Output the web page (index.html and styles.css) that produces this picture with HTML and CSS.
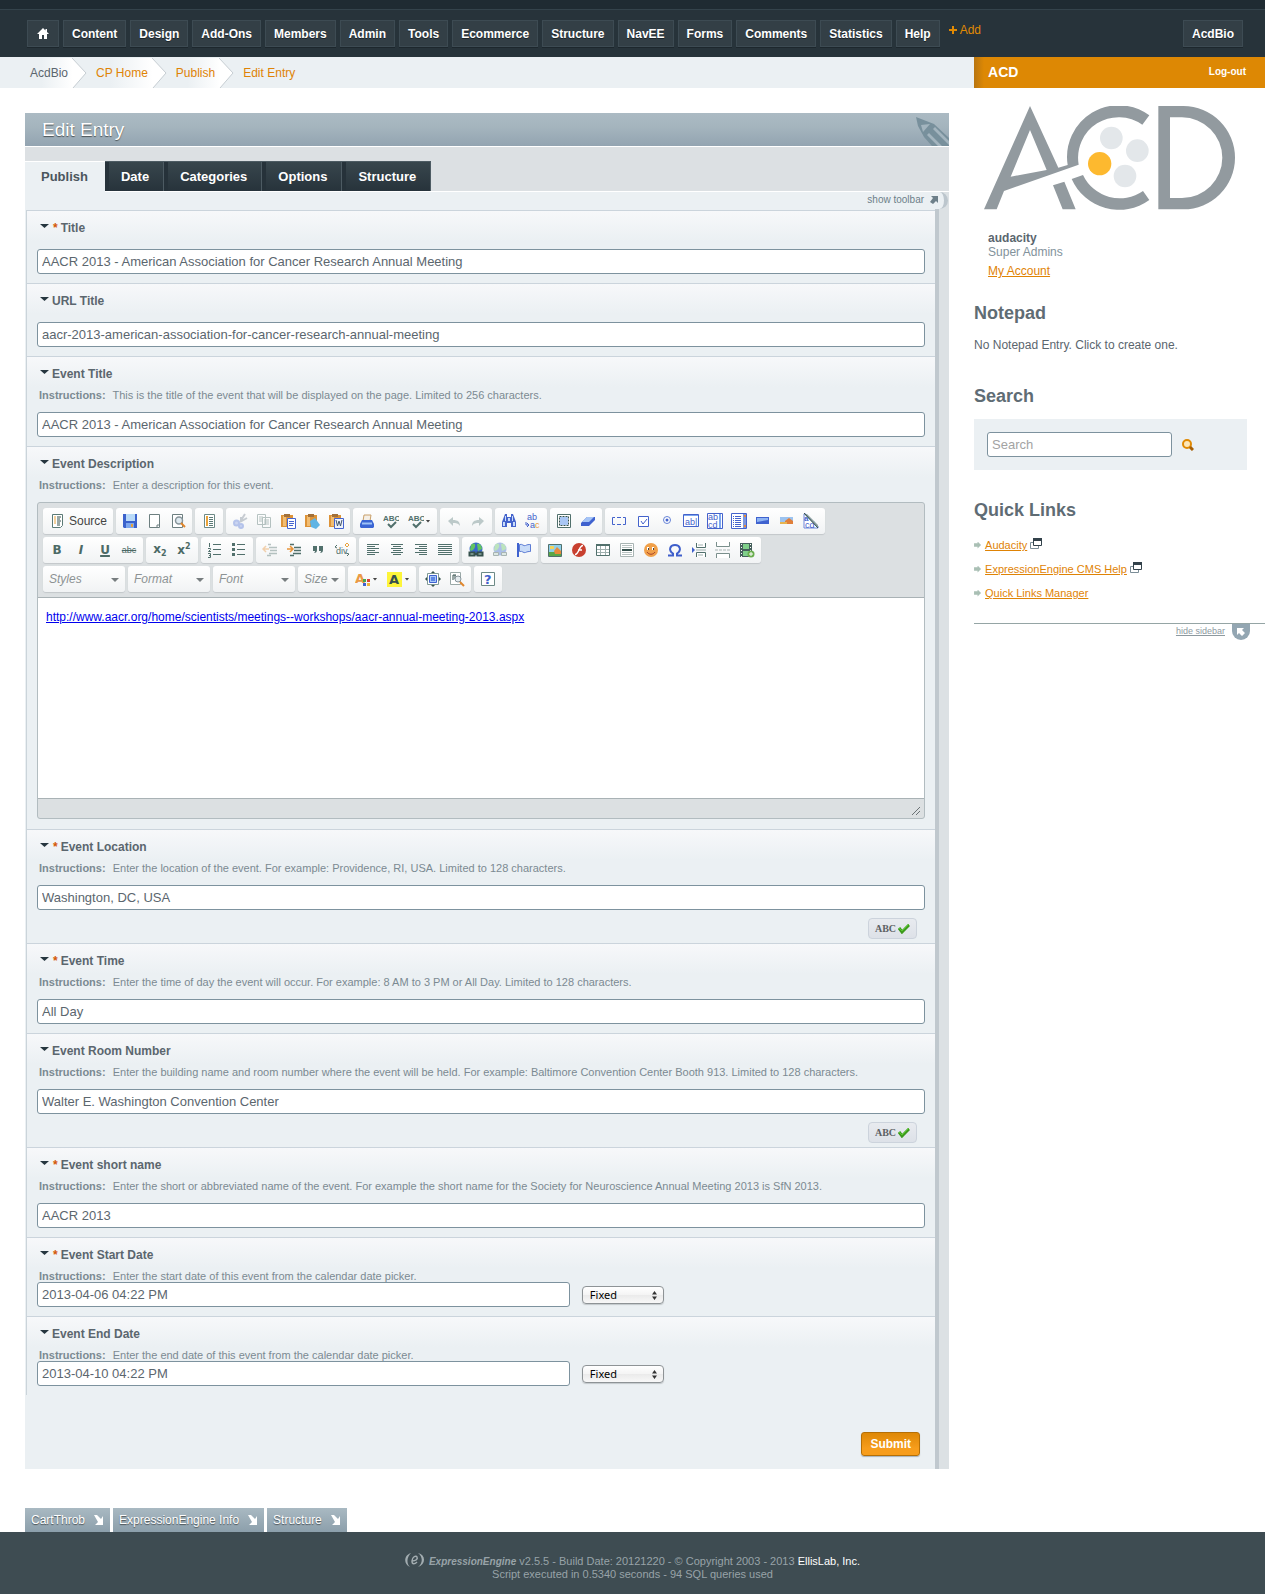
FILE: index.html
```html
<!DOCTYPE html>
<html lang="en">
<head>
<meta charset="utf-8">
<meta name="viewport" content="width=device-width, initial-scale=1">
<title>Edit Entry</title>
<link rel="stylesheet" href="styles.css">
</head>
<body>
<header class="topbar">
  <nav class="nav" aria-label="Main">
    <a class="nav-btn" href="#" aria-label="Home"><svg class="home" viewBox="0 0 12 11"><path d="M6 0 0 6h2v5h3V7h2v4h3V6h2L10 4V1H8.500v1.500z" fill="#fff"/></svg></a>
    <a class="nav-btn" href="#">Content</a>
    <a class="nav-btn" href="#">Design</a>
    <a class="nav-btn" href="#">Add-Ons</a>
    <a class="nav-btn" href="#">Members</a>
    <a class="nav-btn" href="#">Admin</a>
    <a class="nav-btn" href="#">Tools</a>
    <a class="nav-btn" href="#">Ecommerce</a>
    <a class="nav-btn" href="#">Structure</a>
    <a class="nav-btn" href="#">NavEE</a>
    <a class="nav-btn" href="#">Forms</a>
    <a class="nav-btn" href="#">Comments</a>
    <a class="nav-btn" href="#">Statistics</a>
    <a class="nav-btn" href="#">Help</a>
    <a class="nav-add" href="#"><svg viewBox="0 0 8 8"><path d="M3 0h2v3h3v2H5v3H3V5H0V3h3z" fill="#e08a04"/></svg>Add</a>
    <a class="nav-btn nav-site" href="#">AcdBio</a>
  </nav>
</header>

<div class="layout">
  <main class="main">
    <nav class="crumbs" aria-label="Breadcrumb">
      <a class="crumb crumb-root" href="#">AcdBio<svg viewBox="0 0 15 30"><path d="M0 0 14 15 1 30H0z" fill="#fff"/><path d="M0 0 14 15 1 30" fill="none" stroke="#c6cdd2"/></svg></a>
      <a class="crumb" href="#">CP Home<svg viewBox="0 0 15 30"><path d="M0 0 14 15 1 30H0z" fill="#fff"/><path d="M0 0 14 15 1 30" fill="none" stroke="#c6cdd2"/></svg></a>
      <a class="crumb" href="#">Publish<svg viewBox="0 0 15 30"><path d="M0 0 14 15 1 30H0z" fill="#fff"/><path d="M0 0 14 15 1 30" fill="none" stroke="#c6cdd2"/></svg></a>
      <a class="crumb crumb-last" href="#">Edit Entry</a>
    </nav>

    <section class="panel">
      <div class="panel-head">
        <h1>Edit Entry</h1>
        <svg class="pencil" viewBox="0 0 33 29"><path d="M0 0 18 7 33 21V29H16L8 20 2 9z" fill="#78909c"/><path d="M5 8 14 7 7 15zM11 18 13 16 26 29H22zM17 12 19 10 33 24V28z" fill="#a3b4be"/></svg>
      </div>
      <div class="tabs" role="tablist">
        <button class="tab tab-on" type="button" role="tab" aria-selected="true">Publish</button>
        <button class="tab" type="button" role="tab">Date</button>
        <button class="tab" type="button" role="tab">Categories</button>
        <button class="tab" type="button" role="tab">Options</button>
        <button class="tab" type="button" role="tab">Structure</button>
      </div>
      <div class="tool-toggle">
        <a href="#">show toolbar<svg viewBox="0 0 8 8"><path d="M1 0h7v7L6 5 3 8 0 6 3 2z" fill="#6d7f89"/></svg></a>
      </div>

      <form class="form">
        <div class="fields">
          <div class="field">
            <label for="f-title"><i class="req">*</i> Title</label>
            <input class="text bare" id="f-title" type="text" value="AACR 2013 - American Association for Cancer Research Annual Meeting">
          </div>
          <div class="field">
            <label for="f-url">URL Title</label>
            <input class="text bare" id="f-url" type="text" value="aacr-2013-american-association-for-cancer-research-annual-meeting">
          </div>
          <div class="field">
            <label for="f-etitle">Event Title</label>
            <p class="hint"><b>Instructions:</b> This is the title of the event that will be displayed on the page. Limited to 256 characters.</p>
            <input class="text" id="f-etitle" type="text" value="AACR 2013 - American Association for Cancer Research Annual Meeting">
          </div>
          <div class="field field-editor">
            <label for="f-desc">Event Description</label>
            <p class="hint"><b>Instructions:</b> Enter a description for this event.</p>
            <div class="editor">
              <div class="bars">
                <div class="bar">
                  <div class="group">
                    <button class="tb tb-source" type="button"><svg class="ico" viewBox="0 0 16 16"><path d="M3.500 1.500h10v11l-2 2h-8z" fill="#fff" stroke="#5b7a76"/><path d="M8 4h4M8 6h3M8 8h4M8 10h3M8 12h3" stroke="#34504c"/><path d="M5 4h2M5 6h2M5 8h2M5 10h2" stroke="#e8a33c"/></svg>Source</button>
                  </div>
                  <div class="group">
                    <button class="tb" type="button" aria-label="Save"><svg class="ico" viewBox="0 0 16 16"><path d="M1 1h14v14H2L1 14z" fill="#3b62cc"/><path d="M4 1h9v7H4z" fill="#b9daf8"/><path d="M4 10h8v5H4z" fill="#7da7ee"/><path d="M9 11h2v3H9z" fill="#e9a23a"/></svg></button>
                    <button class="tb" type="button" aria-label="New page"><svg class="ico" viewBox="0 0 16 16"><path d="M3.500 1.500h10v13h-10z" fill="#fff" stroke="#6d7f80"/><path d="M11 14v-2h3" fill="none" stroke="#6d7f80"/></svg></button>
                    <button class="tb" type="button" aria-label="Preview"><svg class="ico" viewBox="0 0 16 16"><path d="M2.500 1.500h10v13h-10z" fill="#fff" stroke="#6d7f80"/><circle cx="9" cy="7.500" r="3.500" fill="#dfeaf0" stroke="#87949a" stroke-width="1.500"/><path d="m11 10 4 4" stroke="#e0862c" stroke-width="2"/></svg></button>
                  </div>
                  <div class="group">
                    <button class="tb" type="button" aria-label="Templates"><svg class="ico" viewBox="0 0 16 16"><path d="M3.500 1.500h10v13h-10z" fill="#fff" stroke="#6d8a86"/><path d="M8 4.500h4M8 6.500h4M8 8.500h4M8 10.500h4M8 12.500h4" stroke="#5b7a76"/><path d="M6 3v10" stroke="#eba43a" stroke-width="2"/></svg></button>
                  </div>
                  <div class="group">
                    <button class="tb" type="button" aria-label="Cut"><svg class="ico faded" viewBox="0 0 16 16"><path d="M13 1 8 9M9 4l0 5M15 5 8 9" stroke="#7a8796" stroke-width="2"/><circle cx="4.500" cy="10" r="2.500" fill="#8aa2e6" stroke="#5476d8" stroke-width="2"/><circle cx="9" cy="13" r="2" fill="#8aa2e6" stroke="#5476d8" stroke-width="2"/></svg></button>
                    <button class="tb" type="button" aria-label="Copy"><svg class="ico faded" viewBox="0 0 16 16"><path d="M1.500 1.500h8v10h-8zM6.500 4.500h8v10h-8z" fill="#fff" stroke="#51706c"/><path d="M3 4h4M3 6h3M3 8h3M8 7h5M8 9h5M8 11h5" stroke="#51706c"/></svg></button>
                    <button class="tb" type="button" aria-label="Paste"><svg class="ico" viewBox="0 0 16 16"><path d="M1 2h12v12H1z" fill="#dd9338"/><path d="M3 3h3v10H3z" fill="#f2bd72"/><path d="M4 1h6v3H4z" fill="#a2703a"/><path d="M7.500 5.500h8v10h-8z" fill="#fff" stroke="#4464cf"/><path d="M9 8.500h5M9 10.500h5M9 12.500h4" stroke="#4464cf"/></svg></button>
                    <button class="tb" type="button" aria-label="Paste as plain text"><svg class="ico" viewBox="0 0 16 16"><path d="M1 2h12v12H1z" fill="#dd9338"/><path d="M3 3h3v10H3z" fill="#f2bd72"/><path d="M4 1h6v3H4z" fill="#a2703a"/><path d="m6 8 5-3 5 7-4 4-5-2z" fill="#5fb4e4"/></svg></button>
                    <button class="tb" type="button" aria-label="Paste from Word"><svg class="ico" viewBox="0 0 16 16"><path d="M1 2h12v12H1z" fill="#dd9338"/><path d="M3 3h3v10H3z" fill="#f2bd72"/><path d="M4 1h6v3H4z" fill="#a2703a"/><path d="M6.500 5.500h9v10h-9z" fill="#eef3fb" stroke="#4464cf"/><path d="m8 7 1.500 6L11 8l1.500 5L14 7" fill="none" stroke="#44566e"/></svg></button>
                  </div>
                  <div class="group">
                    <button class="tb" type="button" aria-label="Print"><svg class="ico" viewBox="0 0 16 16"><path d="M5 2h7l-1 6H4z" fill="#f5efe6" stroke="#c9a06a"/><path d="M3 7h10l2 4v3l-1 1H2l-1-1v-3z" fill="#3b66d4"/><path d="M3 10.500h10" stroke="#9fc3f6" stroke-width="2"/></svg></button>
                    <button class="tb" type="button" aria-label="Check spelling"><svg class="ico" viewBox="0 0 16 16"><text x="0" y="8" class="t8">ABC</text><path d="m5 11 3 3 5-5" fill="none" stroke="#51706c" stroke-width="2"/></svg></button>
                    <button class="tb tb-drop" type="button" aria-label="Spell check as you type"><svg class="ico" viewBox="0 0 16 16"><text x="0" y="8" class="t8">ABC</text><path d="m5 11 3 3 5-5" fill="none" stroke="#51706c" stroke-width="2"/></svg></button>
                  </div>
                  <div class="group">
                    <button class="tb" type="button" aria-label="Undo"><svg class="ico" viewBox="0 0 16 16"><path d="m2 8 5-4v3c5 0 7 2 7 6-2-3-4-3-7-3v3z" fill="#bcc9c9"/></svg></button>
                    <button class="tb" type="button" aria-label="Redo"><svg class="ico" viewBox="0 0 16 16"><path d="M14 8 9 4v3c-5 0-7 2-7 6 2-3 4-3 7-3v3z" fill="#bcc9c9"/></svg></button>
                  </div>
                  <div class="group">
                    <button class="tb" type="button" aria-label="Find"><svg class="ico" viewBox="0 0 16 16"><path d="M4 1h2v3h4V1h2l3 8v5h-5v-4H6v4H1V9z" fill="#4463cc"/><path d="M2 9h2v4H2zM12 9h2v4h-2zM4 3h1v5H4zM11 3h1v5h-1zM7 5h2v3H7z" fill="#c9dcfa"/></svg></button>
                    <button class="tb" type="button" aria-label="Replace"><svg class="ico" viewBox="0 0 16 16"><text x="2" y="7" class="t9 blue">ab</text><text x="5" y="15" class="t9 blue">a<tspan fill="#e8993a">c</tspan></text><path d="M1 9v3h3M2 10l2 2-2 2" fill="none" stroke="#4463cc"/></svg></button>
                  </div>
                  <div class="group">
                    <button class="tb" type="button" aria-label="Select all"><svg class="ico" viewBox="0 0 16 16"><path d="M1.500 1.500h13v13h-13z" fill="#fff" stroke="#51706c"/><path d="M4 4h8v8H4z" fill="#a9c6f4"/><path d="M3.500 3.500h9v9h-9z" fill="none" stroke="#35504c" stroke-dasharray="2 1"/></svg></button>
                    <button class="tb" type="button" aria-label="Remove format"><svg class="ico" viewBox="0 0 16 16"><path d="m1 10 6-6h8v3l-6 6H1z" fill="#3f62cf"/><path d="m2 9 5-5h7L9 9z" fill="#a5c4f6"/></svg></button>
                  </div>
                  <div class="group">
                    <button class="tb" type="button" aria-label="Form"><svg class="ico" viewBox="0 0 16 16"><path d="M4 4.500H1.500v7H4M12 4.500h2.500v7H12M6 4.500h4M6 11.500h4" fill="none" stroke="#4463cc"/></svg></button>
                    <button class="tb" type="button" aria-label="Checkbox"><svg class="ico" viewBox="0 0 16 16"><path d="M3.500 3.500h10v10h-10z" fill="#fff" stroke="#4463cc"/><path d="m6 8 2 3 4-5" fill="none" stroke="#4463cc"/></svg></button>
                    <button class="tb" type="button" aria-label="Radio button"><svg class="ico" viewBox="0 0 16 16"><circle cx="8" cy="7" r="3.500" fill="#fff" stroke="#6683d6"/><circle cx="8" cy="7" r="1.500" fill="#4463cc"/></svg></button>
                    <button class="tb" type="button" aria-label="Text field"><svg class="ico" viewBox="0 0 16 16"><path d="M.5 1.500h15v12H.5z" fill="#fff" stroke="#4463cc"/><path d="M1 2.500h14" stroke="#7da7ee"/><text x="2" y="12" class="t9 blue">ab|</text></svg></button>
                    <button class="tb" type="button" aria-label="Textarea"><svg class="ico" viewBox="0 0 16 16"><path d="M.5.500h15v15H.500z" fill="#fff" stroke="#4463cc"/><text x="1" y="7" class="t9 blue">ab</text><text x="1" y="15" class="t9 blue">cd</text><path d="M13 1v14" stroke="#7da7ee" stroke-width="2"/></svg></button>
                    <button class="tb" type="button" aria-label="Selection field"><svg class="ico" viewBox="0 0 16 16"><path d="M.5.500h15v15H.500z" fill="#fff" stroke="#4463cc"/><path d="M4 3.500h6M4 5.500h6M4 7.500h6M4 9.500h6M4 11.500h6M4 13.500h6M2 3.500h1M2 5.500h1M2 7.500h1M2 9.500h1M2 11.500h1M2 13.500h1" stroke="#4463cc"/><path d="M13.500 1v14" stroke="#7d97dd" stroke-width="3"/><path d="M13 2h2v2h-2zM13 12h2v2h-2z" fill="#e6893a"/></svg></button>
                    <button class="tb" type="button" aria-label="Button"><svg class="ico" viewBox="0 0 16 16"><path d="M1 4h13v7H1z" fill="#3f62cf"/><path d="M2 5h11v2L2 9z" fill="#8eb4f3"/></svg></button>
                    <button class="tb" type="button" aria-label="Image button"><svg class="ico" viewBox="0 0 16 16"><path d="M1 4h13v7H1z" fill="#9cc3f0"/><path d="m6 8 4-3 4 3v3H6z" fill="#e07f3a"/><path d="M1 9h7v2H1z" fill="#e7b450"/></svg></button>
                    <button class="tb" type="button" aria-label="Hidden field"><svg class="ico" viewBox="0 0 16 16"><path d="M1 1h2l12 12v2H1z" fill="#fff" stroke="#6d88dc"/><text x="2" y="15" class="t9 blue">cd</text><text x="1" y="8" class="t8 blue">a</text><path d="M4 1 15 12v3L1 1z" fill="#8da0a4"/><path d="m1 0 14 15" stroke="#35504c"/></svg></button>
                  </div>
                </div>
                <div class="bar">
                  <div class="group">
                    <button class="tb tb-txt" type="button"><b>B</b></button>
                    <button class="tb tb-txt tb-i" type="button">I</button>
                    <button class="tb tb-txt" type="button"><u>U</u></button>
                    <button class="tb tb-strike" type="button"><s>abc</s></button>
                  </div>
                  <div class="group">
                    <button class="tb tb-txt" type="button"><span>x<sub>2</sub></span></button>
                    <button class="tb tb-txt" type="button"><span>x<sup>2</sup></span></button>
                  </div>
                  <div class="group">
                    <button class="tb" type="button" aria-label="Numbered list"><svg class="ico" viewBox="0 0 16 16"><path d="M6 2.500h8M6 7.500h8M6 12.500h8" stroke="#51706c"/><path d="M2.500 1v4M1 6.500h2.500v1L1.500 9.500H4M1 11.500h2.500v2H2h1.500v2H1" fill="none" stroke="#51706c"/></svg></button>
                    <button class="tb" type="button" aria-label="Bulleted list"><svg class="ico" viewBox="0 0 16 16"><path d="M6 2.500h8M6 7.500h8M6 12.500h8" stroke="#51706c"/><path d="M1 1h3v3H1zM1 6h3v3H1zM1 11h3v3H1z" fill="#51706c"/></svg></button>
                  </div>
                  <div class="group">
                    <button class="tb" type="button" aria-label="Decrease indent"><svg class="ico faded" viewBox="0 0 16 16"><path d="M6 2.500h3M7 5.500h8M8 8.500h7M7 11.500h8M5 13.500h4" stroke="#51706c" stroke-width="1.500"/><path d="M7 7H2M4 4 1 7l3 3" fill="none" stroke="#e8943a" stroke-width="1.500"/></svg></button>
                    <button class="tb" type="button" aria-label="Increase indent"><svg class="ico" viewBox="0 0 16 16"><path d="M4 2.500h4M8 5.500h7M8 8.500h7M7 11.500h8M4 13.500h4" stroke="#51706c" stroke-width="1.500"/><path d="M1 7h5M4 4l3 3-3 3" fill="none" stroke="#e8943a" stroke-width="1.500"/></svg></button>
                    <button class="tb" type="button" aria-label="Block quote"><svg class="ico" viewBox="0 0 16 16"><path d="M3 4h4v4c0 2-1 3-3 3 1-1 1-2 1-2H3zM9 4h4v4c0 2-1 3-3 3 1-1 1-2 1-2H9z" fill="#51706c"/></svg></button>
                    <button class="tb" type="button" aria-label="Create div"><svg class="ico" viewBox="0 0 16 16"><text x="2" y="12" class="t9">div</text><path d="M3 3 1 5l2 1M12 11l3 1-2 2" fill="none" stroke="#51706c"/><path d="m13 1 2 2-2 2-2-2z" fill="none" stroke="#e8a13c"/></svg></button>
                  </div>
                  <div class="group">
                    <button class="tb" type="button" aria-label="Align left"><svg class="ico px" viewBox="0 0 16 16"><path d="M2 2.500h12M2 4.500h8M2 6.500h12M2 8.500h8M2 10.500h12M2 12.500h8" stroke="#51706c"/></svg></button>
                    <button class="tb" type="button" aria-label="Center"><svg class="ico px" viewBox="0 0 16 16"><path d="M2 2.500h12M4 4.500h8M2 6.500h12M4 8.500h8M2 10.500h12M4 12.500h8" stroke="#51706c"/></svg></button>
                    <button class="tb" type="button" aria-label="Align right"><svg class="ico px" viewBox="0 0 16 16"><path d="M2 2.500h12M6 4.500h8M2 6.500h12M6 8.500h8M2 10.500h12M6 12.500h8" stroke="#51706c"/></svg></button>
                    <button class="tb" type="button" aria-label="Justify"><svg class="ico px" viewBox="0 0 16 16"><path d="M1 2.500h14M1 4.500h14M1 6.500h14M1 8.500h14M1 10.500h14M1 12.500h14" stroke="#51706c"/></svg></button>
                  </div>
                  <div class="group">
                    <button class="tb" type="button" aria-label="Link"><svg class="ico" viewBox="0 0 16 16"><circle cx="8" cy="7" r="6.500" fill="#3a68cc"/><path d="M3 3c3-3 5-1 4 2S3 10 2 8zM9 2c3-1 5 2 5 5l-4 2z" fill="#62c462"/><path d="M1.500 10.500h5v3h-5zM9.500 10.500h5v3h-5zM6 12h4" fill="#b8d4c8" stroke="#35504c" stroke-width="2"/></svg></button>
                    <button class="tb" type="button" aria-label="Unlink"><svg class="ico faded" viewBox="0 0 16 16"><circle cx="8" cy="7" r="6.500" fill="#3a68cc"/><path d="M3 3c3-3 5-1 4 2S3 10 2 8zM9 2c3-1 5 2 5 5l-4 2z" fill="#62c462"/><path d="M1.500 10.500h5v3h-5zM9.500 10.500h5v3h-5z" fill="#b8d4c8" stroke="#35504c"/></svg></button>
                    <button class="tb" type="button" aria-label="Anchor"><svg class="ico" viewBox="0 0 16 16"><path d="M2 1v14" stroke="#3f62cf" stroke-width="2"/><path d="M3.500 2.500c3-1 4 2 6 1s3-1 5-1v7c-2 0-3 0-5 1s-3-2-6-1z" fill="#c9dcf8" stroke="#5d7cd4"/></svg></button>
                  </div>
                  <div class="group">
                    <button class="tb" type="button" aria-label="Image"><svg class="ico" viewBox="0 0 16 16"><path d="M1.500 2.500h13v12h-13z" fill="#8fd0ea" stroke="#51706c"/><path d="M2 10h12v4H2z" fill="#5aa646"/><path d="m7 9 3-4 4 4v3H8z" fill="#e8893a"/><path d="M3 4h4v3H3z" fill="#f4d35a"/></svg></button>
                    <button class="tb" type="button" aria-label="Flash"><svg class="ico" viewBox="0 0 16 16"><circle cx="8" cy="8" r="7" fill="#c8402f"/><path d="M12 3.500c-4 0-4 9-8 9M7 8h4" fill="none" stroke="#fff" stroke-width="1.500"/></svg></button>
                    <button class="tb" type="button" aria-label="Table"><svg class="ico" viewBox="0 0 16 16"><path d="M1.500 2.500h13v11h-13z" fill="#fff" stroke="#51706c"/><path d="M1 3h14" stroke="#51706c" stroke-width="2"/><path d="M2 7.500h12M2 10.500h12M5.500 4v9M10.500 4v9" stroke="#9fb0ae"/></svg></button>
                    <button class="tb" type="button" aria-label="Horizontal line"><svg class="ico" viewBox="0 0 16 16"><path d="M1.500 1.500h13v13h-13z" fill="#fff" stroke="#a9b5b4"/><path d="M3 3.500h10M3 5.500h10M3 10.500h10M3 12.500h10" stroke="#b8c2c1"/><path d="M3 8h10" stroke="#35504c" stroke-width="2"/></svg></button>
                    <button class="tb" type="button" aria-label="Smiley"><svg class="ico" viewBox="0 0 16 16"><circle cx="8" cy="8" r="7" fill="#f0a04a"/><path d="M4 5h2v3H4zM9 5h2v3H9z" fill="#fff"/><path d="M5 6h1v2H5zM10 6h1v2h-1z" fill="#444"/><path d="M4 10c2 3 6 3 8 0" fill="none" stroke="#a8442a"/></svg></button>
                    <button class="tb" type="button" aria-label="Special character"><svg class="ico" viewBox="0 0 16 16"><path d="M1 13.500h5v-2C1 8 3 3 8 3s7 5 2 8.500v2h5" fill="none" stroke="#3f5fcb" stroke-width="2"/></svg></button>
                    <button class="tb" type="button" aria-label="Page break"><svg class="ico" viewBox="0 0 16 16"><path d="M5.500 1v4.500h9V1M5.500 15v-4.500h9V15" fill="#fff" stroke="#51706c"/><path d="M7 3h5M7 13h5M5 8h10" stroke="#9fb0ae"/><path d="m1 5 3 3-3 3z" fill="#3f5fcb"/></svg></button>
                    <button class="tb" type="button" aria-label="Insert divider"><svg class="ico" viewBox="0 0 16 16"><path d="M1.500 0v4.500h13V0M1.500 16v-4.500h13V16" fill="#fff" stroke="#7a8f8c"/><path d="M0 8h16" stroke="#a9b5b4" stroke-dasharray="3 1"/></svg></button>
                    <button class="tb" type="button" aria-label="Media"><svg class="ico" viewBox="0 0 16 16"><path d="M1 1h12v14H1z" fill="#45605c"/><path d="M4 2h6v5H4zM4 9h6v5H4z" fill="#7fd08a"/><path d="M2.500 2v13M11.500 2v13" stroke="#fff" stroke-dasharray="1 2"/><circle cx="12" cy="12" r="3.500" fill="#6aae4e"/><path d="M12 10v4M10 12h4" stroke="#fff"/></svg></button>
                  </div>
                </div>
                <div class="bar">
                  <div class="group"><span class="combo"><select aria-label="Styles"><option>Styles</option></select></span></div>
                  <div class="group"><span class="combo"><select aria-label="Format"><option>Format</option></select></span></div>
                  <div class="group"><span class="combo"><select aria-label="Font"><option>Font</option></select></span></div>
                  <div class="group"><span class="combo combo-sm"><select aria-label="Size"><option>Size</option></select></span></div>
                  <div class="group">
                    <button class="tb tb-drop" type="button" aria-label="Text color"><svg class="ico" viewBox="0 0 16 16"><text x="0" y="12" class="t13" fill="#eb9a45">A</text><path d="M8 8h3v3H8z" fill="#4aa84a"/><path d="M12 8h3v3h-3z" fill="#d8433a"/><path d="M8 12h3v3H8z" fill="#3f62cf"/><path d="M12 12h3v3h-3z" fill="#efb53c"/></svg></button>
                    <button class="tb tb-drop" type="button" aria-label="Background color"><svg class="ico" viewBox="0 0 16 16"><path d="M0 1h15v15H0z" fill="#fdf53a"/><text x="2" y="13" class="t13" fill="#35504c">A</text></svg></button>
                  </div>
                  <div class="group">
                    <button class="tb" type="button" aria-label="Maximize"><svg class="ico" viewBox="0 0 16 16"><path d="M2.500 2.500h11v11h-11z" fill="#fff" stroke="#7f9995"/><path d="M4.500 4.500h7v7h-7z" fill="#a9c9f8" stroke="#3f62cf"/><path d="M6 6h4v4H6z" fill="#5d86e4"/><path d="m8 0 2 2H6zM8 16l2-2H6zM0 8l2-2v4zM16 8l-2-2v4z" fill="#35504c"/></svg></button>
                    <button class="tb" type="button" aria-label="Show blocks"><svg class="ico" viewBox="0 0 16 16"><path d="M1.500 1.500h10v12h-10z" fill="#fff" stroke="#9aa9a7"/><path d="M4 4v5M4 4h3M6 4v4" stroke="#35504c"/><circle cx="9" cy="8" r="3" fill="#e4ebee" stroke="#87949a"/><path d="m11 11 4 4" stroke="#e0862c" stroke-width="2"/></svg></button>
                  </div>
                  <div class="group">
                    <button class="tb" type="button" aria-label="About"><svg class="ico" viewBox="0 0 16 16"><path d="M1.500 1.500h13v13h-13z" fill="#fff" stroke="#6d8a86"/><text x="4" y="13" class="t13" fill="#3f5fcb">?</text></svg></button>
                  </div>
                </div>
              </div>
              <div class="doc" id="f-desc" contenteditable="true"><a href="#">http://www.aacr.org/home/scientists/meetings--workshops/aacr-annual-meeting-2013.aspx</a></div>
              <div class="editor-foot"><svg viewBox="0 0 8 8"><path d="M0 8 8 0M4 8l4-4" stroke="#6b7275"/></svg></div>
            </div>
          </div>
          <div class="field field-spell">
            <label for="f-loc"><i class="req">*</i> Event Location</label>
            <p class="hint"><b>Instructions:</b> Enter the location of the event. For example: Providence, RI, USA. Limited to 128 characters.</p>
            <input class="text" id="f-loc" type="text" value="Washington, DC, USA">
            <button class="spell" type="button">ABC<svg viewBox="0 0 12 11"><path d="m1 5 3 4 7-7" fill="none" stroke="#3c9a1c" stroke-width="3"/><path d="m1 5 3 3 7-7" fill="none" stroke="#59c82e"/></svg></button>
          </div>
          <div class="field">
            <label for="f-time"><i class="req">*</i> Event Time</label>
            <p class="hint"><b>Instructions:</b> Enter the time of day the event will occur. For example: 8 AM to 3 PM or All Day. Limited to 128 characters.</p>
            <input class="text" id="f-time" type="text" value="All Day">
          </div>
          <div class="field field-spell">
            <label for="f-room">Event Room Number</label>
            <p class="hint"><b>Instructions:</b> Enter the building name and room number where the event will be held. For example: Baltimore Convention Center Booth 913. Limited to 128 characters.</p>
            <input class="text" id="f-room" type="text" value="Walter E. Washington Convention Center">
            <button class="spell" type="button">ABC<svg viewBox="0 0 12 11"><path d="m1 5 3 4 7-7" fill="none" stroke="#3c9a1c" stroke-width="3"/><path d="m1 5 3 3 7-7" fill="none" stroke="#59c82e"/></svg></button>
          </div>
          <div class="field">
            <label for="f-short"><i class="req">*</i> Event short name</label>
            <p class="hint"><b>Instructions:</b> Enter the short or abbreviated name of the event. For example the short name for the Society for Neuroscience Annual Meeting 2013 is SfN 2013.</p>
            <input class="text" id="f-short" type="text" value="AACR 2013">
          </div>
          <div class="field">
            <label for="f-start"><i class="req">*</i> Event Start Date</label>
            <p class="hint"><b>Instructions:</b> Enter the start date of this event from the calendar date picker.</p>
            <div class="date"><input class="text" id="f-start" type="text" value="2013-04-06 04:22 PM"><span class="fixed"><select aria-label="Start date localization"><option>Fixed</option></select><svg viewBox="0 0 5 9"><path d="M0 3.500 2.500 0 5 3.500zM0 5.500 2.500 9 5 5.500z" fill="#333"/></svg></span></div>
          </div>
          <div class="field">
            <label for="f-end">Event End Date</label>
            <p class="hint"><b>Instructions:</b> Enter the end date of this event from the calendar date picker.</p>
            <div class="date"><input class="text" id="f-end" type="text" value="2013-04-10 04:22 PM"><span class="fixed"><select aria-label="End date localization"><option>Fixed</option></select><svg viewBox="0 0 5 9"><path d="M0 3.500 2.500 0 5 3.500zM0 5.500 2.500 9 5 5.500z" fill="#333"/></svg></span></div>
          </div>
        </div>
        <div class="actions"><button class="submit" type="submit">Submit</button></div>
      </form>
    </section>

    <nav class="acc-tabs" aria-label="Accessories">
      <a href="#">CartThrob<svg viewBox="0 0 10 10"><path d="M0 0 3 0 7 4 9 1V10H1L4 7z" fill="#fff"/></svg></a>
      <a href="#">ExpressionEngine Info<svg viewBox="0 0 10 10"><path d="M0 0 3 0 7 4 9 1V10H1L4 7z" fill="#fff"/></svg></a>
      <a href="#">Structure<svg viewBox="0 0 10 10"><path d="M0 0 3 0 7 4 9 1V10H1L4 7z" fill="#fff"/></svg></a>
    </nav>
  </main>

  <aside class="side">
    <div class="side-head"><strong>ACD</strong><a href="#">Log-out</a></div>
    <div class="profile">
      <svg class="logo" viewBox="134 318 753 312" role="img" aria-label="ACD"><g fill="#929a9f"><path fill-rule="evenodd" d="M272 318 357 503 385 495A155 155 0 0 1 630 346L609 374A122 122 0 0 0 418 494L194 573 172 628H134zM272 390 214 530 322 510z"/><path d="M341 556 375 545 409 628H370zM397 537 431 525A122 122 0 0 0 611 573L630 600A155 155 0 0 1 397 537z"/><path fill-rule="evenodd" d="M657 318H732A155 155 0 0 1 732 628H657zM692 352V594H728A121 121 0 0 0 728 352z"/></g><g fill="#e3e7ea"><circle cx="516" cy="414" r="34"/><circle cx="594" cy="452" r="34"/><circle cx="557" cy="528" r="34"/></g><circle cx="481" cy="491" r="35" fill="#fdb92f"/></svg>
      <div class="who"><b>audacity</b><span>Super Admins</span><a href="#">My Account</a></div>
    </div>
    <section class="block">
      <h2>Notepad</h2>
      <p>No Notepad Entry. Click to create one.</p>
    </section>
    <section class="block">
      <h2>Search</h2>
      <form class="search"><input class="text" type="search" placeholder="Search" aria-label="Search"><button type="submit" aria-label="Go"><svg viewBox="0 0 12 12"><circle cx="5" cy="5" r="4" fill="#fde7b8" stroke="#e08a04" stroke-width="2"/><path d="m8 8 3 3" stroke="#a85f04" stroke-width="3"/></svg></button></form>
    </section>
    <section class="block">
      <h2>Quick Links</h2>
      <ul class="links">
        <li><a href="#">Audacity</a><svg class="ext" viewBox="0 0 12 11"><path d="M.500 4.500h8v6h-8z" fill="#fff" stroke="#7b8d97"/><path d="M3.500.500h8v7h-8z" fill="#fff" stroke="#33424b"/><path d="M3 1.500h9" stroke="#33424b" stroke-width="3"/></svg></li>
        <li><a href="#">ExpressionEngine CMS Help</a><svg class="ext" viewBox="0 0 12 11"><path d="M.500 4.500h8v6h-8z" fill="#fff" stroke="#7b8d97"/><path d="M3.500.500h8v7h-8z" fill="#fff" stroke="#33424b"/><path d="M3 1.500h9" stroke="#33424b" stroke-width="3"/></svg></li>
        <li><a href="#">Quick Links Manager</a></li>
      </ul>
    </section>
    <div class="side-foot"><a href="#">hide sidebar</a><span class="badge"><svg viewBox="0 0 8 8"><path d="M0 0h7L5 2 8 5 5 8 2 5 0 7z" fill="#fff"/></svg></span></div>
  </aside>
</div>

<footer class="foot">
  <p><svg class="ee" viewBox="0 0 20 14"><path d="M6 0C-1 2-2 11 5 14 1 10 2 4 6 0zM13 0c8 2 8 11 0 14 5-4 5-10 0-14z" fill="#a3adb1"/><path d="M7 8c4 0 6-2 5-4s-5 0-5 4 3 3 5 1" fill="none" stroke="#a3adb1" stroke-width="1.500"/></svg><em>ExpressionEngine</em> v2.5.5 - Build Date: 20121220 - © Copyright 2003 - 2013 <a href="#">EllisLab, Inc.</a></p>
  <p>Script executed in 0.5340 seconds - 94 SQL queries used</p>
</footer>
</body>
</html>
```
FILE: styles.css
```css
* { box-sizing: border-box; }
body {
  margin: 0;
  min-height: 100vh;
  display: flex;
  flex-direction: column;
  font: 12px/16px "Liberation Sans", Arial, sans-serif;
  color: #5b666e;
  background: #fff;
}
h1, h2, p, ul { margin: 0; padding: 0; }
a { color: #df8305; }
svg { display: block; flex: none; }
button, input, select { font-family: inherit; margin: 0; }
button { border: 0; background: none; padding: 0; cursor: pointer; }

/* top navigation */
.topbar {
  border-top: 9px solid #1f2b32;
  background: #27333a;
}
.nav {
  display: flex;
  gap: 4px;
  padding: 10px 22px 10px 27px;
  border-top: 1px solid #34434b;
}
.nav-btn {
  display: flex;
  align-items: center;
  height: 27px;
  padding: 0 8px;
  border: 1px solid #3d4b53;
  background: #333f46;
  box-shadow: 0 1px 0 #1d272d;
  color: #fff;
  font-weight: bold;
  text-decoration: none;
  text-shadow: 0 1px 0 #1b2429;
}
.home { width: 12px; height: 11px; margin: 0 1px; }
.nav-add {
  display: flex;
  align-items: center;
  gap: 3px;
  height: 20px;
  margin-left: 5px;
  color: #e08a04;
  text-decoration: none;
}
.nav-add svg { width: 8px; height: 8px; }
.nav-site { margin-left: auto; }

/* two columns */
.layout {
  display: grid;
  grid-template-columns: minmax(0, 77fr) minmax(0, 23fr);
  flex: 1;
}
.main { display: flex; flex-direction: column; }
.crumbs {
  display: flex;
  height: 31px;
  padding-left: 30px;
  background: #ebf0f3;
}
.crumb {
  display: flex;
  align-items: center;
  gap: 4px;
  margin: 1px 9px 0 0;
  text-decoration: none;
  background: linear-gradient(90deg, #ebf0f3 20%, #fff calc(100% - 14px), #ebf0f3 calc(100% - 14px));
}
.crumb svg { width: 15px; height: 30px; }
.crumb-root { color: #5b666e; }
.crumb-last { background: none; }

/* panel */
.panel { margin: 25px 25px 0; }
.panel-head {
  display: flex;
  justify-content: space-between;
  align-items: flex-end;
  height: 34px;
  padding-left: 17px;
  border-bottom: 1px solid #fff;
  background: linear-gradient(#abbac3, #a5b5be 40%, #93a4b1);
}
.panel-head h1 {
  font-size: 19px;
  line-height: 33px;
  font-weight: normal;
  color: #fff;
  text-shadow: 0 1px 1px #4a5256;
}
.pencil { width: 33px; height: 29px; }
.tabs {
  display: flex;
  padding-top: 14px;
  background: linear-gradient(#fff, #fff) 0 100% / 100% 1px no-repeat #dce0e3;
}
.tab {
  height: 30px;
  padding: 0 14px 1px 16px;
  border-top: 1px solid #4d5b63;
  border-right: 1px solid #4d5b63;
  box-shadow: inset 4px 0 0 #26323a;
  background: linear-gradient(#38464d, #27333b);
  color: #fff;
  font-size: 13px;
  font-weight: bold;
}
.tab-on {
  height: 31px;
  padding: 0 17px 2px 16px;
  border-top: 1px solid #fff;
  border-right: 0;
  box-shadow: none;
  background: #ebf0f3;
  color: #4b565d;
}
.tool-toggle {
  display: flex;
  justify-content: flex-end;
  height: 17px;
  padding-right: 1px;
  background: linear-gradient(90deg, #ebf0f3 calc(100% - 10px), #dce1e4 calc(100% - 10px));
}
.tool-toggle a {
  display: flex;
  align-items: center;
  gap: 6px;
  padding: 0 6px 2px 0;
  border-right: 4px solid #bcc6cd;
  border-radius: 0 9px 9px 0;
  background: #ebf0f3;
  color: #6d7f89;
  font-size: 10px;
  text-decoration: none;
}
.tool-toggle svg { width: 8px; height: 8px; }

.form {
  padding: 1px 0 0 1px;
  border-right: 10px solid #dce1e4;
  box-shadow: inset -4px 0 0 #c0c8ce;
  background: #ebf0f3;
}
.fields { margin-right: 4px; border-left: 1px solid #cbd4da; }
.field {
  display: flex;
  flex-direction: column;
  padding: 9px 10px 9px;
  border-top: 1px solid #cbd4dc;
  background: linear-gradient(#f7f8fa, #ebf0f3 30px);
}
.field label {
  display: flex;
  gap: 3px;
  padding-left: 3px;
  font-weight: bold;
}
.field label::before {
  content: "";
  width: 9px;
  height: 4px;
  margin-top: 4px;
  background: #26363f;
  clip-path: polygon(0 0, 100% 0, 50% 100%);
}
.req { margin-left: 1px; color: #d4580a; font-style: normal; }
.hint {
  margin-top: 7px;
  padding-left: 2px;
  font-size: 11px;
  line-height: 12px;
  color: #7b8a92;
}
.hint b { margin-right: 4px; }
.text {
  width: 100%;
  height: 25px;
  margin-top: 11px;
  padding: 0 4px;
  border: 1px solid #7d929e;
  border-radius: 3px;
  background: #fff;
  color: #5b666e;
  font-size: 13px;
  outline: 0;
}
.text.bare { margin-top: 13px; }
.field-editor { padding-bottom: 10px; }
.field-spell { padding-bottom: 4px; }
.spell {
  display: flex;
  align-items: center;
  align-self: flex-end;
  gap: 2px;
  height: 21px;
  margin: 8px 8px 0 0;
  padding: 0 6px;
  border: 1px solid #ccd3dc;
  border-radius: 4px;
  background: linear-gradient(#e8ebef, #dde1e8);
  color: #5c6063;
  font: bold 10px "Liberation Serif", serif;
}
.spell svg { width: 12px; height: 11px; }
.date { display: flex; align-items: center; gap: 12px; }
.date .text { width: 60%; margin: 0; }
.fixed { position: relative; }
.fixed select {
  display: block;
  width: 82px;
  height: 18px;
  padding: 0 7px;
  appearance: none;
  border: 1px solid #8e9396;
  border-radius: 4px;
  box-shadow: 0 1px 1px #c3c8cb;
  background: linear-gradient(#fff, #f4f4f4 50%, #eaeaea 50%, #f8f8f8);
  color: #000;
  font: 11px/16px "Noto Sans", sans-serif;
}
.fixed svg {
  position: absolute;
  right: 7px;
  top: 5px;
  width: 5px;
  height: 9px;
  pointer-events: none;
}
.actions {
  display: flex;
  justify-content: flex-end;
  padding: 37px 19px 13px 0;
}
.submit {
  height: 24px;
  padding: 0 8px;
  border: 1px solid #b56f06;
  border-radius: 3px;
  box-shadow: 0 1px 1px #a9b3bb;
  background: linear-gradient(#de8806, #f79d1c 70%);
  color: #fff;
  font-size: 12px;
  font-weight: bold;
}

/* rich text editor */
.editor {
  margin-top: 11px;
  border: 1px solid #b2bcc0;
  border-radius: 3px;
  background: #dce0e2;
}
.bars {
  display: flex;
  flex-direction: column;
  gap: 3px;
  padding: 5px;
}
.bar { display: flex; flex-wrap: wrap; gap: 3px; }
.group {
  display: flex;
  height: 26px;
  padding: 0 2px;
  border-radius: 3px;
  background: linear-gradient(#fff, #f1f3f4);
  box-shadow: 0 1px 1px #c2c7ca;
}
.tb {
  display: flex;
  align-items: center;
  justify-content: center;
  width: 24px;
  height: 26px;
  color: #4c6a66;
}
.ico { width: 16px; height: 16px; }
.px { shape-rendering: crispEdges; }
.faded { opacity: 0.4; }
.tb-source {
  width: 66px;
  gap: 4px;
  color: #444;
  font-size: 12px;
}
.tb-drop { width: 32px; gap: 2px; }
.tb-drop::after, .combo::after {
  content: "";
  width: 5px;
  height: 3px;
  background: #444;
  clip-path: polygon(0 0, 100% 0, 50% 100%);
}
.tb-txt { font: bold 12px/16px "DejaVu Sans", sans-serif; }
.tb-txt u { text-decoration-thickness: 2px; }
.tb-txt sub, .tb-txt sup { font-size: 8px; line-height: 8px; }
.tb-i { font-style: italic; }
.tb-strike { font-size: 9px; }
.t8 { font: bold 8px "Liberation Sans", sans-serif; fill: #51706c; }
.t9 { font: 9px "Liberation Sans", sans-serif; fill: #51706c; }
.blue { fill: #4463cc; }
.t13 { font: bold 13px "DejaVu Sans", sans-serif; }
.combo { position: relative; width: 78px; }
.combo-sm { width: 43px; }
.combo select {
  display: block;
  width: 100%;
  height: 26px;
  padding: 0 4px;
  appearance: none;
  border: 0;
  background: none;
  color: #8d9394;
  font-size: 12px;
  font-style: italic;
}
.combo::after {
  position: absolute;
  right: 4px;
  top: 12px;
  width: 8px;
  height: 4px;
  background: #777d7f;
  pointer-events: none;
}
.doc {
  min-height: 202px;
  padding: 11px 8px;
  border-top: 1px solid #a9b2b5;
  border-bottom: 1px solid #a9b2b5;
  background: #fff;
}
.doc a { color: #00e; }
.editor-foot { display: flex; justify-content: flex-end; padding: 8px 4px 3px; }
.editor-foot svg { width: 8px; height: 8px; }

/* accessory tabs */
.acc-tabs {
  display: flex;
  gap: 3px;
  margin-top: auto;
  padding: 39px 0 0 25px;
}
.acc-tabs a {
  display: flex;
  align-items: center;
  gap: 9px;
  height: 24px;
  padding: 0 6px;
  background: linear-gradient(#a9b9c2, #8c9fab);
  color: #fff;
  text-decoration: none;
  text-shadow: 0 1px 1px #4a5256;
}
.acc-tabs svg { width: 10px; height: 10px; }

/* sidebar */
.side-head {
  display: flex;
  align-items: center;
  justify-content: space-between;
  height: 31px;
  padding: 0 19px 2px 14px;
  background: linear-gradient(90deg, #b87510, #dd8804 10px);
  color: #fff;
  font-size: 14px;
}
.side-head a {
  color: #fff;
  font-size: 10px;
  font-weight: bold;
  text-decoration: none;
}
.profile { padding: 18px 11px 0 10px; }
.logo { width: 251px; max-width: 100%; height: 104px; }
.who {
  display: flex;
  flex-direction: column;
  align-items: flex-start;
  padding: 21px 4px 0;
  line-height: 14px;
  color: #82929b;
}
.who b { color: #5b666e; }
.who a { margin-top: 5px; }
.block { padding: 25px 18px 0 0; }
.block h2 {
  font-size: 18px;
  line-height: 20px;
  color: #5f6c74;
}
.block p { padding: 14px 0 8px; }
.search {
  display: flex;
  align-items: center;
  gap: 10px;
  margin: 13px 0 5px;
  padding: 13px;
  background: #ebf0f3;
}
.search .text { width: 185px; margin: 0; }
.search .text::placeholder { color: #a3a3a3; }
.search svg { width: 12px; height: 12px; }
.links { padding-top: 13px; list-style: none; }
.links li {
  display: flex;
  align-items: center;
  height: 24px;
  font-size: 11px;
}
.links li::before {
  content: "";
  width: 7px;
  height: 7px;
  margin-right: 4px;
  background: #a9bfb4;
  clip-path: polygon(0 25%, 50% 25%, 50% 0, 100% 50%, 50% 100%, 50% 75%, 0 75%);
}
.ext { width: 12px; height: 11px; margin: 0 0 4px 3px; }
.side-foot {
  display: flex;
  justify-content: flex-end;
  gap: 7px;
  margin-top: 18px;
  padding-right: 15px;
  border-top: 1px solid #95a5a5;
}
.side-foot a { color: #8d999f; font-size: 9px; line-height: 14px; }
.badge {
  display: grid;
  place-items: center;
  width: 18px;
  height: 16px;
  border-radius: 0 0 9px 9px;
  background: #93a6b2;
}
.badge svg { width: 8px; height: 8px; }

/* footer */
.foot {
  height: 62px;
  padding-top: 23px;
  background: #3e4c52;
  color: #98a3a8;
  font-size: 11px;
  line-height: 12px;
  text-align: center;
}
.foot a { color: #fff; text-decoration: none; }
.foot em { font-size: 10px; font-weight: bold; }
.ee { display: inline-block; width: 20px; height: 14px; margin: -6px 4px -2px 0; }
```
